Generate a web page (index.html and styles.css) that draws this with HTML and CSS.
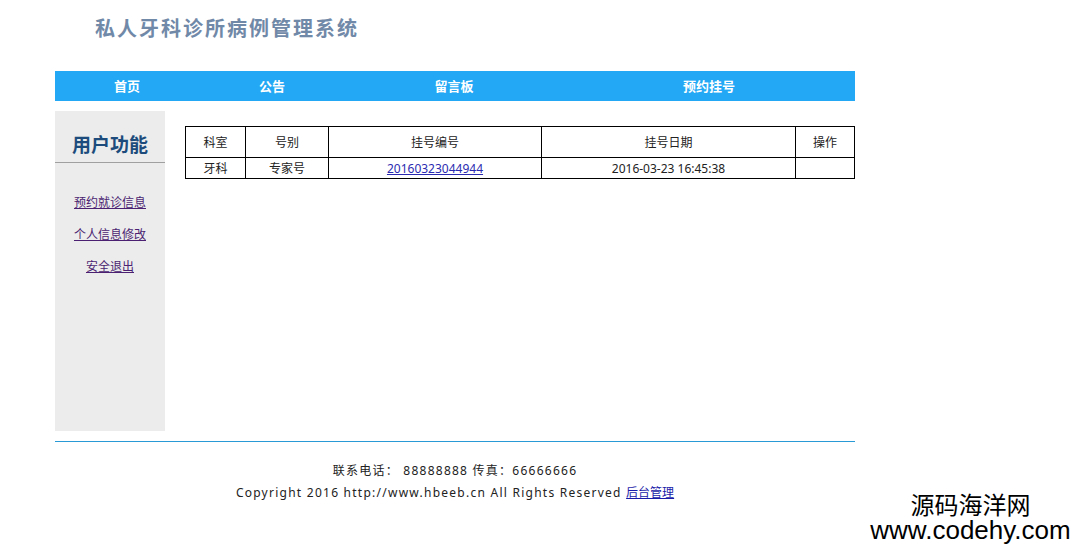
FILE: index.html
```html
<!DOCTYPE html>
<html lang="zh-CN">
<head>
<meta charset="utf-8">
<title>私人牙科诊所病例管理系统</title>
<link rel="stylesheet" href="styles.css">
</head>
<body>
<div class="page">
  <div class="header">
    <h1 class="title">私人牙科诊所病例管理系统</h1>
  </div>
  <ul class="nav">
    <li class="n1"><a href="#">首页</a></li>
    <li class="n2"><a href="#">公告</a></li>
    <li class="n3"><a href="#">留言板</a></li>
    <li class="n4"><a href="#">预约挂号</a></li>
  </ul>
  <div class="body">
    <div class="side">
      <h2 class="side-title">用户功能</h2>
      <div class="side-links">
        <a href="#">预约就诊信息</a>
        <a href="#">个人信息修改</a>
        <a href="#">安全退出</a>
      </div>
    </div>
    <div class="main">
      <table class="grid">
        <tr class="head">
          <td class="c1">科室</td>
          <td class="c2">号别</td>
          <td class="c3">挂号编号</td>
          <td class="c4">挂号日期</td>
          <td class="c5">操作</td>
        </tr>
        <tr class="row">
          <td>牙科</td>
          <td>专家号</td>
          <td><a class="num" href="#">20160323044944</a></td>
          <td>2016-03-23 16:45:38</td>
          <td></td>
        </tr>
      </table>
    </div>
  </div>
  <div class="footer">
    <p>联系电话： 88888888 传真：66666666</p>
    <p>Copyright 2016 http://www.hbeeb.cn All Rights Reserved <a href="#">后台管理</a></p>
  </div>
</div>
<div class="watermark">
  <div class="wm1">源码海洋网</div>
  <div class="wm2">www.codehy.com</div>
</div>
</body>
</html>
```
FILE: styles.css
```css
html, body {
  margin: 0;
  padding: 0;
  background: #fff;
}
body {
  font-family: "Noto Sans", "Noto Sans CJK SC", sans-serif;
  font-size: 12px;
  color: #222;
}
.page {
  width: 800px;
  margin-left: 55px;
}
.header {
  height: 71px;
}
.title {
  margin: 0;
  padding: 14px 0 0 40px;
  font-family: "Noto Sans CJK SC", sans-serif;
  font-size: 20px;
  line-height: 28px;
  font-weight: 700;
  color: #7189a8;
  letter-spacing: 2px;
}
.nav {
  list-style: none;
  margin: 0;
  padding: 0;
  display: flex;
  height: 30px;
  background: #22a8f5;
}
.nav li {
  text-align: center;
  line-height: 30px;
}
.nav a {
  color: #fff;
  font-weight: 700;
  font-size: 13px;
  text-decoration: none;
  font-family: "Noto Sans CJK SC", sans-serif;
}
.n1 { width: 144px; }
.n2 { width: 146px; }
.n3 { width: 218px; }
.n4 { width: 292px; }
.body {
  display: flex;
  margin-top: 10px;
  gap: 20px;
}
.side {
  width: 110px;
  height: 320px;
  background: #ececec;
}
.side-title {
  margin: 0;
  padding-top: 20px;
  height: 31px;
  line-height: 26px;
  text-align: center;
  font-family: "Noto Sans CJK SC", sans-serif;
  font-size: 19px;
  font-weight: 700;
  color: #1d4c7c;
  border-bottom: 1px solid #a0a0a0;
}
.side-links {
  display: flex;
  flex-direction: column;
  align-items: center;
  padding-top: 30px;
  gap: 14px;
}
.side-links a {
  font-family: "Noto Sans CJK SC", sans-serif;
  font-size: 12px;
  line-height: 18px;
  color: #4b1f72;
  text-decoration: underline;
}
.main {
  flex: 1;
  padding-top: 15px;
}
.grid {
  width: 670px;
  border-collapse: collapse;
  table-layout: fixed;
}
.grid td {
  border: 1px solid #000;
  text-align: center;
  padding: 0;
  font-size: 12px;
  color: #222;
}
.head td {
  height: 30px;
}
.row td {
  height: 20px;
}
.c1 { width: 59px; }
.c2 { width: 82px; }
.c3 { width: 212px; }
.c4 { width: 253px; }
.c5 { width: auto; }
.num {
  color: #2a2ab0;
  text-decoration: underline;
}
.footer {
  margin-top: 10px;
  border-top: 1px solid #2a9ad6;
  padding-top: 18px;
  text-align: center;
}
.footer p {
  margin: 0;
  line-height: 22px;
  font-size: 12px;
  letter-spacing: 1.25px;
  color: #222;
}
.footer a {
  color: #1a1aa8;
  text-decoration: underline;
  letter-spacing: 0;
}
.watermark {
  position: absolute;
  left: 866px;
  top: 490px;
  width: 209px;
  text-align: center;
  color: #000;
  font-family: "Liberation Sans", "Noto Sans CJK SC", sans-serif;
}
.wm1 {
  font-family: "Noto Sans CJK SC", sans-serif;
  font-size: 24px;
  line-height: 27px;
}
.wm2 {
  font-size: 26px;
  line-height: 26px;
}
```
